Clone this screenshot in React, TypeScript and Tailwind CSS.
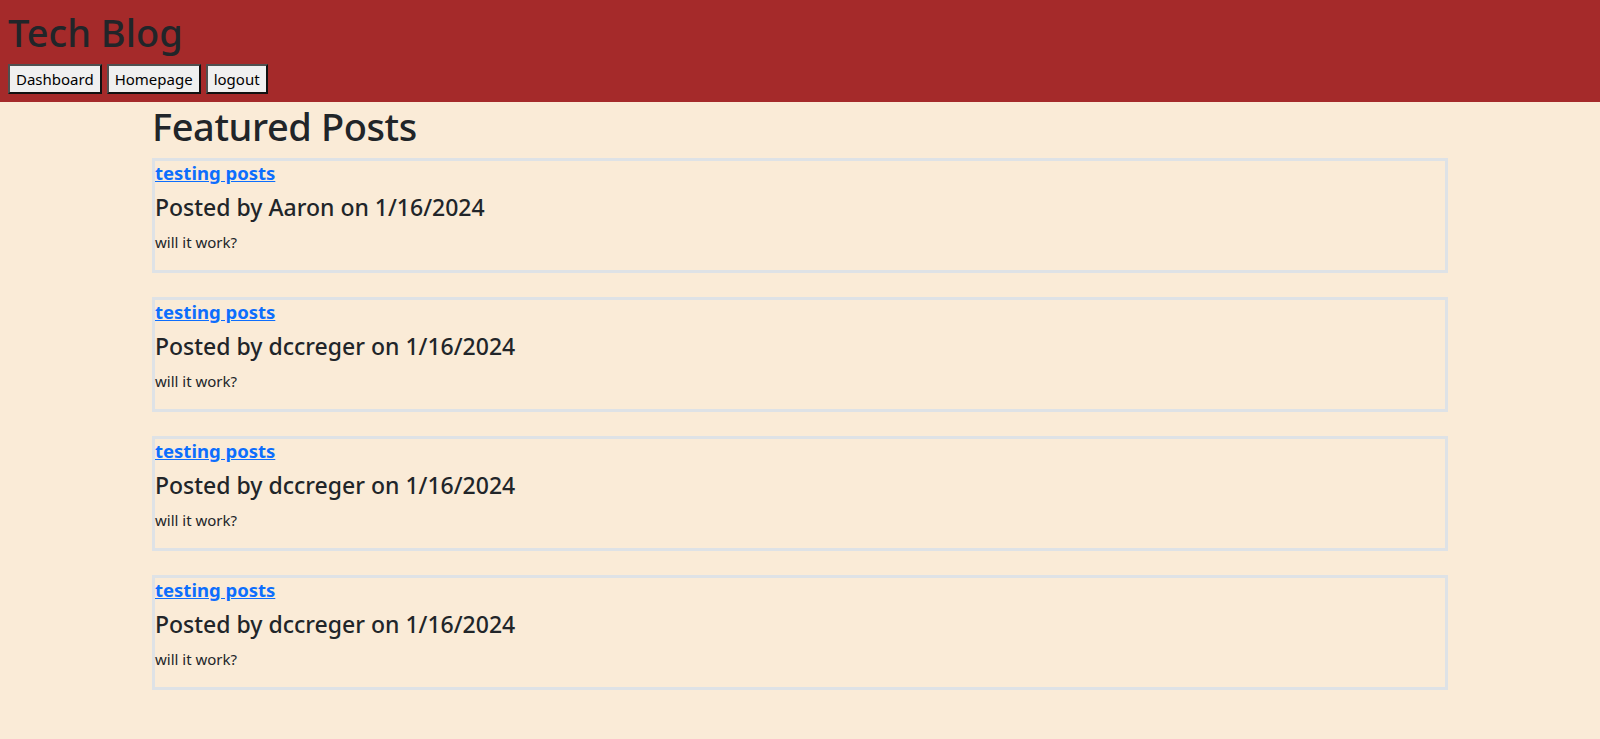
import React from "react";

const posts = [
  { title: "testing posts", author: "Aaron", date: "1/16/2024", body: "will it work?" },
  { title: "testing posts", author: "dccreger", date: "1/16/2024", body: "will it work?" },
  { title: "testing posts", author: "dccreger", date: "1/16/2024", body: "will it work?" },
  { title: "testing posts", author: "dccreger", date: "1/16/2024", body: "will it work?" },
];

const font = { fontFamily: '"Noto Sans", "Open Sans", sans-serif' };

function NavButton({ children }: { children: React.ReactNode }) {
  return (
    <button className="h-[30px] border-2 border-t-[#505050] border-l-[#505050] border-r-[#111] border-b-[#111] bg-[#f0f0f0] px-[6px] py-px text-[15px] leading-[24px] text-black">
      {children}
    </button>
  );
}

export default function App() {
  return (
    <div className="min-h-[739px] bg-[#faebd7] text-[#212529]" style={font}>
      <header className="bg-[#a52a2a] p-2">
        <h1 className="mb-2 text-[38px] font-medium leading-[48px] text-[#212529]">Tech Blog</h1>
        <div className="flex gap-[5px]">
          <NavButton>Dashboard</NavButton>
          <NavButton>Homepage</NavButton>
          <NavButton>logout</NavButton>
        </div>
      </header>
      <main className="mx-auto w-[1320px] px-3">
        <h1 className="mb-2 text-[38px] font-medium leading-[48px] tracking-[-0.4px]">Featured Posts</h1>
        {posts.map((p, i) => (
          <div key={i} className="mb-6 border-[3px] border-[#dee2e6]">
            <a href="#" className="mb-2 block w-fit text-[18.5px] font-bold leading-[24px] text-[#0d6efd] underline">
              {p.title}
            </a>
            <h4 className="mb-2 text-[23px] font-medium leading-[29px]">
              Posted by {p.author} on {p.date}
            </h4>
            <p className="mb-4 text-[15px] leading-[24px]">{p.body}</p>
          </div>
        ))}
      </main>
    </div>
  );
}
